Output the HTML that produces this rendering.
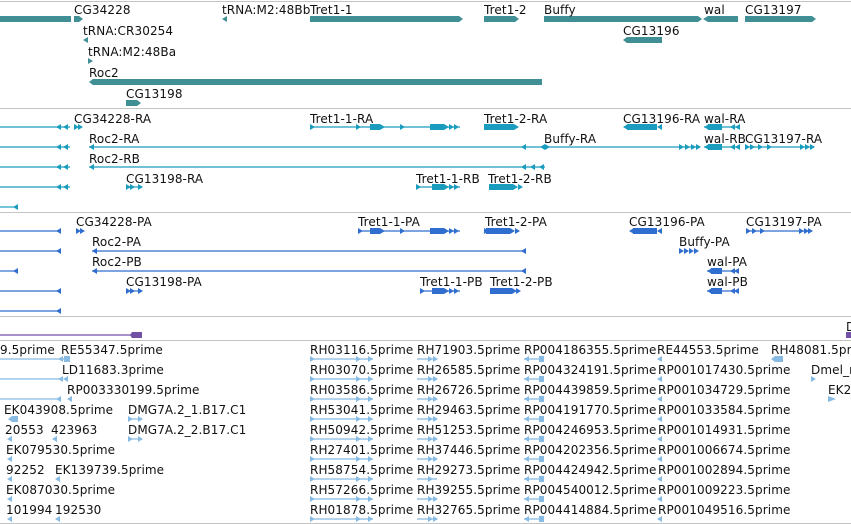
<!DOCTYPE html>
<html><head><meta charset="utf-8"><style>
html,body{margin:0;padding:0;background:#fff;width:851px;height:524px;overflow:hidden}
svg{display:block}
text{font-family:"DejaVu Sans","Liberation Sans",sans-serif;font-size:12px;fill:#111;letter-spacing:0.1px;transform:translateY(1px)}
</style></head><body>
<svg width="851" height="524" xmlns="http://www.w3.org/2000/svg">
<defs>
<path id="R" d="M0,-3L5,0L0,3Z"/>
<path id="L" d="M5,-3L0,0L5,3Z"/>
</defs>
<g stroke="#c4c4c4" stroke-width="1">
<line x1="0" y1="1.5" x2="851" y2="1.5"/>
<line x1="0" y1="108.5" x2="851" y2="108.5"/>
<line x1="0" y1="212.5" x2="851" y2="212.5"/>
<line x1="0" y1="316.5" x2="851" y2="316.5"/>
<line x1="0" y1="340.5" x2="851" y2="340.5"/>
<line x1="0" y1="523.5" x2="851" y2="523.5"/>
</g>

<g fill="#3f8f94">
<rect x="0" y="16" width="71" height="6"/>
<path d="M74,16H79L83,19L79,22H74Z"/>
<use href="#L" x="222" y="19"/>
<path d="M310,16H459L463,19L459,22H310Z"/>
<path d="M484,16H515L519,19L515,22H484Z"/>
<path d="M544,16H698L702,19L698,22H544Z"/>
<path d="M708,16H738V22H708L703,19Z"/>
<path d="M745,16H812L816,19L812,22H745Z"/>
<use href="#L" x="83" y="40"/>
<path d="M627,37H662V43H627L623,40Z"/>
<use href="#R" x="88" y="61"/>
<path d="M93,79H542V85H93L89,82Z"/>
<path d="M126,100H137L141,103L137,106H126Z"/>
</g>
<text x="74" y="13">CG34228</text>
<text x="222" y="13">tRNA:M2:48Bb</text>
<text x="310" y="13">Tret1-1</text>
<text x="484" y="13">Tret1-2</text>
<text x="544" y="13">Buffy</text>
<text x="704" y="13">wal</text>
<text x="745" y="13">CG13197</text>
<text x="83" y="34">tRNA:CR30254</text>
<text x="623" y="34">CG13196</text>
<text x="88" y="55">tRNA:M2:48Ba</text>
<text x="89" y="76">Roc2</text>
<text x="126" y="97">CG13198</text>

<g stroke="#1a9cbf" stroke-width="1.2">
<line x1="0" y1="127" x2="70" y2="127"/>
<line x1="310" y1="127" x2="460" y2="127"/>
<line x1="0" y1="147" x2="70" y2="147"/>
<line x1="89" y1="147" x2="700" y2="147"/>
<line x1="704" y1="147" x2="740" y2="147"/>
<line x1="745" y1="147" x2="814" y2="147"/>
<line x1="0" y1="167" x2="70" y2="167"/>
<line x1="89" y1="167" x2="545" y2="167"/>
<line x1="0" y1="187" x2="70" y2="187"/>
<line x1="126" y1="187" x2="142" y2="187"/>
<line x1="416" y1="187" x2="460" y2="187"/>
<line x1="0" y1="207" x2="16" y2="207"/>
<line x1="704" y1="127" x2="740" y2="127"/>
</g>
<g fill="#1a9cbf">
<use href="#L" x="56" y="127"/><use href="#L" x="63" y="127"/><use href="#R" x="74" y="127"/><use href="#R" x="78" y="127"/>
<use href="#R" x="310" y="127"/><use href="#R" x="356" y="127"/><rect x="370" y="124" width="10" height="6"/><use href="#R" x="380" y="127"/><use href="#R" x="400" y="127"/>
<rect x="430" y="124" width="14" height="6"/><use href="#R" x="444" y="127"/><use href="#R" x="449" y="127"/><use href="#R" x="454" y="127"/>
<rect x="484" y="124" width="30" height="6"/><use href="#R" x="514" y="127"/>
<rect x="627" y="124" width="30" height="6"/><use href="#L" x="623" y="127"/><use href="#L" x="657" y="127"/>
<rect x="708" y="124" width="14" height="6"/><use href="#L" x="704" y="127"/><use href="#L" x="730" y="127"/><use href="#L" x="735" y="127"/>
<use href="#L" x="56" y="147"/><use href="#L" x="63" y="147"/><use href="#L" x="89" y="147"/>
<use href="#L" x="521" y="147"/><use href="#L" x="540" y="147"/><use href="#R" x="545" y="147"/>
<use href="#R" x="679" y="147"/><use href="#R" x="685" y="147"/><use href="#R" x="691" y="147"/><use href="#R" x="696" y="147"/>
<rect x="708" y="144" width="14" height="6"/><use href="#L" x="704" y="147"/><use href="#L" x="730" y="147"/><use href="#L" x="735" y="147"/>
<use href="#R" x="745" y="147"/><use href="#R" x="750" y="147"/><use href="#R" x="758" y="147"/><use href="#R" x="767" y="147"/><use href="#R" x="800" y="147"/><use href="#R" x="805" y="147"/><use href="#R" x="810" y="147"/>
<use href="#L" x="56" y="167"/><use href="#L" x="63" y="167"/><use href="#L" x="89" y="167"/>
<use href="#L" x="521" y="167"/><use href="#L" x="530" y="167"/><use href="#L" x="539" y="167"/>
<use href="#L" x="56" y="187"/><use href="#L" x="63" y="187"/><use href="#R" x="126" y="187"/><use href="#R" x="130" y="187"/><use href="#R" x="138" y="187"/>
<use href="#R" x="416" y="187"/><rect x="432" y="184" width="12" height="6"/><use href="#R" x="444" y="187"/><use href="#R" x="449" y="187"/><use href="#R" x="454" y="187"/>
<rect x="489" y="184" width="24" height="6"/><use href="#R" x="513" y="187"/><use href="#R" x="518" y="187"/>
<use href="#L" x="13" y="207"/>
</g>
<text x="74" y="122">CG34228-RA</text>
<text x="310" y="122">Tret1-1-RA</text>
<text x="484" y="122">Tret1-2-RA</text>
<text x="623" y="122">CG13196-RA</text>
<text x="704" y="122">wal-RA</text>
<text x="89" y="142">Roc2-RA</text>
<text x="544" y="142">Buffy-RA</text>
<text x="704" y="142">wal-RB</text>
<text x="745" y="142">CG13197-RA</text>
<text x="89" y="162">Roc2-RB</text>
<text x="126" y="182">CG13198-RA</text>
<text x="416" y="182">Tret1-1-RB</text>
<text x="488" y="182">Tret1-2-RB</text>

<g stroke="#2f6dce" stroke-width="1.2">
<line x1="0" y1="231" x2="60" y2="231"/>
<line x1="358" y1="231" x2="460" y2="231"/>
<line x1="746" y1="231" x2="812" y2="231"/>
<line x1="0" y1="251" x2="60" y2="251"/>
<line x1="92" y1="251" x2="526" y2="251"/>
<line x1="0" y1="271" x2="16" y2="271"/>
<line x1="92" y1="271" x2="526" y2="271"/>
<line x1="707" y1="271" x2="738" y2="271"/>
<line x1="0" y1="291" x2="60" y2="291"/>
<line x1="126" y1="291" x2="142" y2="291"/>
<line x1="420" y1="291" x2="460" y2="291"/>
<line x1="707" y1="291" x2="738" y2="291"/>
<line x1="0" y1="311" x2="60" y2="311"/>
</g>
<g fill="#2f6dce">
<use href="#L" x="56" y="231"/><use href="#R" x="76" y="231"/><use href="#R" x="80" y="231"/>
<use href="#R" x="358" y="231"/><rect x="370" y="228" width="10" height="6"/><use href="#R" x="380" y="231"/><use href="#R" x="400" y="231"/>
<rect x="430" y="228" width="14" height="6"/><use href="#R" x="444" y="231"/><use href="#R" x="449" y="231"/><use href="#R" x="454" y="231"/>
<rect x="486" y="228" width="24" height="6"/><use href="#R" x="484" y="231"/><use href="#R" x="510" y="231"/><use href="#R" x="515" y="231"/>
<rect x="633" y="228" width="24" height="6"/><use href="#L" x="629" y="231"/><use href="#L" x="657" y="231"/>
<use href="#R" x="746" y="231"/><use href="#R" x="752" y="231"/><use href="#R" x="760" y="231"/><use href="#R" x="799" y="231"/><use href="#R" x="804" y="231"/><use href="#R" x="808" y="231"/>
<use href="#L" x="56" y="251"/><use href="#L" x="92" y="251"/><use href="#L" x="521" y="251"/>
<use href="#R" x="679" y="251"/><use href="#R" x="684" y="251"/><use href="#R" x="689" y="251"/><use href="#R" x="694" y="251"/>
<use href="#L" x="13" y="271"/><use href="#L" x="92" y="271"/><use href="#L" x="521" y="271"/>
<rect x="711" y="268" width="11" height="6"/><use href="#L" x="707" y="271"/><use href="#L" x="730" y="271"/><use href="#L" x="734" y="271"/>
<use href="#L" x="56" y="291"/><use href="#R" x="126" y="291"/><use href="#R" x="130" y="291"/><use href="#R" x="138" y="291"/>
<use href="#R" x="420" y="291"/><rect x="432" y="288" width="12" height="6"/><use href="#R" x="444" y="291"/><use href="#R" x="449" y="291"/><use href="#R" x="454" y="291"/>
<rect x="490" y="288" width="22" height="6"/><use href="#R" x="512" y="291"/><use href="#R" x="516" y="291"/>
<rect x="711" y="288" width="11" height="6"/><use href="#L" x="707" y="291"/><use href="#L" x="730" y="291"/><use href="#L" x="734" y="291"/>
<use href="#L" x="56" y="311"/>
</g>
<text x="76" y="225">CG34228-PA</text>
<text x="358" y="225">Tret1-1-PA</text>
<text x="485" y="225">Tret1-2-PA</text>
<text x="629" y="225">CG13196-PA</text>
<text x="746" y="225">CG13197-PA</text>
<text x="92" y="245">Roc2-PA</text>
<text x="679" y="245">Buffy-PA</text>
<text x="92" y="265">Roc2-PB</text>
<text x="707" y="265">wal-PA</text>
<text x="126" y="285">CG13198-PA</text>
<text x="420" y="285">Tret1-1-PB</text>
<text x="490" y="285">Tret1-2-PB</text>
<text x="707" y="285">wal-PB</text>

<line x1="0" y1="335" x2="134" y2="335" stroke="#7150a6" stroke-width="1.2"/>
<path d="M132,332H142V338H132L130,335Z" fill="#7150a6"/>
<rect x="846" y="332" width="5" height="6" fill="#7150a6"/>
<text x="846" y="330">D</text>

<g stroke="#88bbe3" stroke-width="1.2">
<line x1="0" y1="359" x2="70" y2="359"/>
<line x1="0" y1="379" x2="62" y2="379"/>
<line x1="0" y1="399" x2="58" y2="399"/>
<line x1="524" y1="359" x2="544" y2="359"/>
<line x1="524" y1="379" x2="544" y2="379"/>
<line x1="524" y1="399" x2="544" y2="399"/>
<line x1="524" y1="419" x2="544" y2="419"/>
<line x1="524" y1="439" x2="544" y2="439"/>
<line x1="524" y1="459" x2="544" y2="459"/>
<line x1="524" y1="479" x2="544" y2="479"/>
<line x1="524" y1="499" x2="544" y2="499"/>
<line x1="524" y1="519" x2="544" y2="519"/>
<line x1="310" y1="359" x2="373" y2="359"/>
<line x1="310" y1="379" x2="373" y2="379"/>
<line x1="310" y1="399" x2="373" y2="399"/>
<line x1="310" y1="419" x2="373" y2="419"/>
<line x1="310" y1="439" x2="373" y2="439"/>
<line x1="310" y1="459" x2="373" y2="459"/>
<line x1="310" y1="479" x2="373" y2="479"/>
<line x1="310" y1="499" x2="373" y2="499"/>
<line x1="310" y1="519" x2="373" y2="519"/>
<line x1="417" y1="359" x2="437" y2="359"/>
<line x1="417" y1="379" x2="437" y2="379"/>
<line x1="417" y1="399" x2="437" y2="399"/>
<line x1="417" y1="419" x2="437" y2="419"/>
<line x1="417" y1="439" x2="437" y2="439"/>
<line x1="417" y1="459" x2="437" y2="459"/>
<line x1="417" y1="479" x2="437" y2="479"/>
<line x1="417" y1="499" x2="437" y2="499"/>
<line x1="417" y1="519" x2="437" y2="519"/>
<line x1="128" y1="419" x2="142" y2="419"/>
<line x1="128" y1="439" x2="142" y2="439"/>
</g>
<g fill="#88bbe3">
<use href="#L" x="58" y="359"/><path d="M64,356H70V362H64Z"/>
<use href="#L" x="58" y="379"/><use href="#L" x="63" y="379"/>
<use href="#L" x="56" y="399"/><use href="#L" x="67" y="399"/>
<path d="M8,419L12,416H18V422H12Z"/><use href="#R" x="128" y="419"/><use href="#R" x="138" y="419"/>
<use href="#L" x="7" y="439"/><use href="#L" x="52" y="439"/><use href="#R" x="128" y="439"/><use href="#R" x="138" y="439"/>
<use href="#L" x="7" y="459"/>
<use href="#L" x="7" y="479"/><use href="#L" x="55" y="479"/>
<use href="#L" x="7" y="499"/>
<use href="#L" x="7" y="519"/><use href="#L" x="55" y="519"/>
<use href="#R" x="310" y="359"/><use href="#R" x="356" y="359"/><use href="#R" x="368" y="359"/>
<use href="#R" x="310" y="379"/><use href="#R" x="356" y="379"/><use href="#R" x="368" y="379"/>
<use href="#R" x="310" y="399"/><use href="#R" x="356" y="399"/><use href="#R" x="368" y="399"/>
<use href="#R" x="310" y="419"/><use href="#R" x="356" y="419"/><use href="#R" x="368" y="419"/>
<use href="#R" x="310" y="439"/><use href="#R" x="356" y="439"/><use href="#R" x="368" y="439"/>
<use href="#R" x="310" y="459"/><use href="#R" x="356" y="459"/><use href="#R" x="368" y="459"/>
<use href="#R" x="310" y="479"/><use href="#R" x="356" y="479"/><use href="#R" x="368" y="479"/>
<use href="#R" x="310" y="499"/><use href="#R" x="356" y="499"/><use href="#R" x="368" y="499"/>
<use href="#R" x="310" y="519"/><use href="#R" x="356" y="519"/><use href="#R" x="368" y="519"/>
<use href="#R" x="428" y="359"/><use href="#R" x="433" y="359"/>
<use href="#R" x="428" y="379"/><use href="#R" x="433" y="379"/>
<use href="#R" x="428" y="399"/><use href="#R" x="433" y="399"/>
<use href="#R" x="428" y="419"/><use href="#R" x="433" y="419"/>
<use href="#R" x="428" y="439"/><use href="#R" x="433" y="439"/>
<use href="#R" x="428" y="459"/><use href="#R" x="433" y="459"/>
<use href="#R" x="428" y="479"/>
<use href="#R" x="428" y="499"/><use href="#R" x="433" y="499"/>
<use href="#R" x="428" y="519"/><use href="#R" x="433" y="519"/>
<use href="#L" x="524" y="359"/><use href="#L" x="524" y="379"/><use href="#L" x="524" y="399"/><use href="#L" x="524" y="419"/><use href="#L" x="524" y="439"/><use href="#L" x="524" y="459"/><use href="#L" x="524" y="479"/><use href="#L" x="524" y="499"/><use href="#L" x="524" y="519"/>
<rect x="539" y="356" width="5" height="6"/><rect x="539" y="376" width="5" height="6"/><rect x="539" y="396" width="5" height="6"/><rect x="539" y="416" width="5" height="6"/><rect x="539" y="436" width="5" height="6"/><rect x="539" y="456" width="5" height="6"/><rect x="539" y="476" width="5" height="6"/><rect x="539" y="496" width="5" height="6"/><rect x="539" y="516" width="5" height="6"/>
<use href="#L" x="657" y="359"/><use href="#L" x="657" y="379"/><use href="#L" x="657" y="399"/><use href="#L" x="657" y="419"/><use href="#L" x="657" y="439"/><use href="#L" x="657" y="459"/><use href="#L" x="657" y="479"/><use href="#L" x="657" y="499"/><use href="#L" x="657" y="519"/>
<path d="M771,359L775,356H783V362H775Z"/>
<use href="#R" x="811" y="379"/>
<path d="M828,396L836,399L828,402Z"/>
</g>
<text x="0" y="353">9.5prime</text>
<text x="61" y="353">RE55347.5prime</text>
<text x="62" y="373">LD11683.3prime</text>
<text x="67" y="393">RP003330199.5prime</text>
<text x="4" y="413">EK043908.5prime</text>
<text x="128" y="413">DMG7A.2_1.B17.C1</text>
<text x="5" y="433">20553</text>
<text x="51" y="433">423963</text>
<text x="128" y="433">DMG7A.2_2.B17.C1</text>
<text x="6" y="453">EK079530.5prime</text>
<text x="6" y="473">92252</text>
<text x="55" y="473">EK139739.5prime</text>
<text x="6" y="493">EK087030.5prime</text>
<text x="6" y="513">101994</text>
<text x="55" y="513">192530</text>

<text x="310" y="353">RH03116.5prime</text>
<text x="310" y="373">RH03070.5prime</text>
<text x="310" y="393">RH03586.5prime</text>
<text x="310" y="413">RH53041.5prime</text>
<text x="310" y="433">RH50942.5prime</text>
<text x="310" y="453">RH27401.5prime</text>
<text x="310" y="473">RH58754.5prime</text>
<text x="310" y="493">RH57266.5prime</text>
<text x="310" y="513">RH01878.5prime</text>

<text x="417" y="353">RH71903.5prime</text>
<text x="417" y="373">RH26585.5prime</text>
<text x="417" y="393">RH26726.5prime</text>
<text x="417" y="413">RH29463.5prime</text>
<text x="417" y="433">RH51253.5prime</text>
<text x="417" y="453">RH37446.5prime</text>
<text x="417" y="473">RH29273.5prime</text>
<text x="417" y="493">RH39255.5prime</text>
<text x="417" y="513">RH32765.5prime</text>

<text x="524" y="353">RP004186355.5prime</text>
<text x="524" y="373">RP004324191.5prime</text>
<text x="524" y="393">RP004439859.5prime</text>
<text x="524" y="413">RP004191770.5prime</text>
<text x="524" y="433">RP004246953.5prime</text>
<text x="524" y="453">RP004202356.5prime</text>
<text x="524" y="473">RP004424942.5prime</text>
<text x="524" y="493">RP004540012.5prime</text>
<text x="524" y="513">RP004414884.5prime</text>

<text x="657" y="353">RE44553.5prime</text>
<text x="658" y="373">RP001017430.5prime</text>
<text x="658" y="393">RP001034729.5prime</text>
<text x="658" y="413">RP001033584.5prime</text>
<text x="658" y="433">RP001014931.5prime</text>
<text x="658" y="453">RP001006674.5prime</text>
<text x="658" y="473">RP001002894.5prime</text>
<text x="658" y="493">RP001009223.5prime</text>
<text x="658" y="513">RP001049516.5prime</text>

<text x="771" y="353">RH48081.5prime</text>
<text x="811" y="373">Dmel_r</text>
<text x="828" y="393">EK2</text>
</svg>
</body></html>
